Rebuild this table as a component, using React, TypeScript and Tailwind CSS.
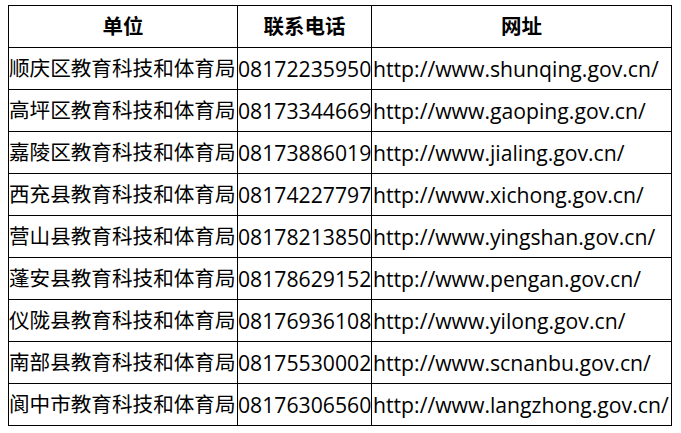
import React from "react";

const rows: [string, string, string][] = [
  ["顺庆区教育科技和体育局", "08172235950", "http://www.shunqing.gov.cn/"],
  ["高坪区教育科技和体育局", "08173344669", "http://www.gaoping.gov.cn/"],
  ["嘉陵区教育科技和体育局", "08173886019", "http://www.jialing.gov.cn/"],
  ["西充县教育科技和体育局", "08174227797", "http://www.xichong.gov.cn/"],
  ["营山县教育科技和体育局", "08178213850", "http://www.yingshan.gov.cn/"],
  ["蓬安县教育科技和体育局", "08178629152", "http://www.pengan.gov.cn/"],
  ["仪陇县教育科技和体育局", "08176936108", "http://www.yilong.gov.cn/"],
  ["南部县教育科技和体育局", "08175530002", "http://www.scnanbu.gov.cn/"],
  ["阆中市教育科技和体育局", "08176306560", "http://www.langzhong.gov.cn/"],
];

export default function App() {
  return (
    <div className="w-[681px] h-[433px] bg-white pt-[5px] pl-[8px] font-['Open_Sans','Noto_Sans_CJK_SC',sans-serif] text-black">
      <div className="grid w-[664px] grid-cols-[228px_133px_299px] auto-rows-[41px] gap-px bg-black p-px">
        <div className="flex items-center justify-center bg-white text-[20.5px] font-bold">单位</div>
        <div className="flex items-center justify-center bg-white text-[20.5px] font-bold">联系电话</div>
        <div className="flex items-center justify-center bg-white text-[20.5px] font-bold">网址</div>
        {rows.map(([a, b, c]) => (
          <React.Fragment key={a}>
            <div className="flex items-center overflow-hidden whitespace-nowrap bg-white text-[20.6px] leading-none">{a}</div>
            <div className="flex items-center overflow-hidden whitespace-nowrap bg-white text-[21.2px] leading-none">{b}</div>
            <div className="flex items-center overflow-hidden whitespace-nowrap bg-white pl-px text-[21.2px] leading-none">{c}</div>
          </React.Fragment>
        ))}
      </div>
    </div>
  );
}
